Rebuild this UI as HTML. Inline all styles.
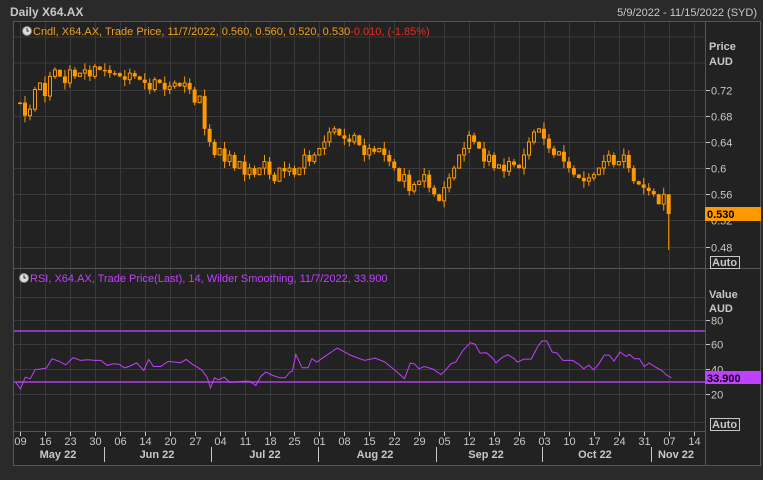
<!DOCTYPE html>
<html><head><meta charset="utf-8"><style>
html,body{margin:0;padding:0;background:#2a2a2a;width:763px;height:480px;overflow:hidden;font-family:"Liberation Sans",sans-serif}
svg text{font-family:"Liberation Sans",sans-serif}
</style></head><body>
<svg id="s" width="763" height="480" xmlns="http://www.w3.org/2000/svg">
<rect x="0" y="0" width="763" height="480" fill="#2a2a2a"/>
<rect x="13" y="21" width="748" height="445" fill="#222"/>
<rect x="13.5" y="21.5" width="747" height="444" fill="none" stroke="#555"/>
<text x="10" y="16" font-size="12" font-weight="bold" fill="#c8c8c8">Daily X64.AX</text>
<text x="757" y="16" font-size="11" fill="#c8c8c8" text-anchor="end">5/9/2022 - 11/15/2022 (SYD)</text>
<g id="grid" stroke="#3a3a3a" stroke-width="1"></g>
<line x1="14" y1="268.5" x2="761" y2="268.5" stroke="#555"/>
<line x1="705.5" y1="22" x2="705.5" y2="465" stroke="#555"/>
<line x1="14" y1="431.5" x2="705" y2="431.5" stroke="#555"/>
<g id="cand"></g>
<line x1="14" y1="331" x2="705" y2="331" stroke="#b040e0" stroke-width="1.5"/>
<line x1="14" y1="382" x2="705" y2="382" stroke="#b040e0" stroke-width="1.5"/>
<polyline id="rsi" fill="none" stroke="#c040ff" stroke-width="1"/>
<circle cx="27" cy="31" r="4.5" fill="#ddd" stroke="#888"/><path d="M27 28v3h2" stroke="#333" fill="none"/>
<text x="33" y="35" font-size="11" fill="#f0a020">Cndl, X64.AX, Trade Price,  11/7/2022, 0.560, 0.560, 0.520, 0.530<tspan fill="#e83020">-0.010, (-1.85%)</tspan></text>
<circle cx="24" cy="278" r="4.5" fill="#ddd" stroke="#888"/><path d="M24 275v3h2" stroke="#333" fill="none"/>
<text x="30" y="282" font-size="11" fill="#c040ff">RSI, X64.AX, Trade Price(Last),  14, Wilder Smoothing,  11/7/2022, 33.900</text>
<g font-size="11" fill="#c8c8c8">
<text x="709" y="50" font-weight="bold">Price</text><text x="709" y="65" font-weight="bold">AUD</text>
<text x="709" y="298" font-weight="bold">Value</text><text x="709" y="312" font-weight="bold">AUD</text>
</g>
<g id="ax" font-size="11" fill="#c8c8c8"></g>
<rect x="705" y="207" width="56" height="14" fill="#ff9900"/>
<text x="707" y="218" font-size="11" font-weight="bold" fill="#000">0.530</text>
<rect x="705" y="371" width="56" height="13" fill="#c040ff"/>
<text x="707" y="382" font-size="11" font-weight="bold" fill="#000">33.900</text>
<rect x="710.5" y="256.5" width="29" height="12" fill="none" stroke="#c8c8c8"/>
<text x="712" y="266" font-size="11" font-weight="bold" fill="#c8c8c8">Auto</text>
<rect x="710.5" y="418.5" width="29" height="12" fill="none" stroke="#c8c8c8"/>
<text x="712" y="428" font-size="11" font-weight="bold" fill="#c8c8c8">Auto</text>
<g id="dates" font-size="11" fill="#c8c8c8" text-anchor="middle"></g>
</svg>
<script>
var NS="http://www.w3.org/2000/svg";
function el(p,t,a,tx){var e=document.createElementNS(NS,t);for(var k in a)e.setAttribute(k,a[k]);if(tx!=null)e.textContent=tx;document.getElementById(p).appendChild(e);return e;}
var wk=24.95,x0=20;
function PY(p){return 89.5+(0.72-p)*655;}
var py=[0.72,0.68,0.64,0.6,0.56,0.52,0.48];
py.forEach(function(p){var y=Math.round(PY(p))+0.5;el("grid","line",{x1:14,y1:y,x2:705,y2:y});el("grid","line",{x1:705,y1:y,x2:710,y2:y,stroke:"#c8c8c8"});el("ax","text",{x:711,y:y+4},String(p));});
[63,37].forEach(function(y){el("grid","line",{x1:14,y1:y,x2:705,y2:y});});
var ry={80:320,60:344,40:369,20:394};
for(var v in ry){var y=ry[v]+0.5;el("grid","line",{x1:14,y1:y,x2:705,y2:y});el("grid","line",{x1:705,y1:y,x2:710,y2:y,stroke:"#c8c8c8"});el("ax","text",{x:711,y:y+4},v);}
el("grid","line",{x1:14,y1:297.5,x2:705,y2:297.5});el("grid","line",{x1:14,y1:422.5,x2:705,y2:422.5});
var lab=["09","16","23","30","06","14","20","27","04","11","18","25","01","08","15","22","29","05","12","19","26","03","10","17","24","31","07","14"];
lab.forEach(function(l,i){var x=Math.round(x0+i*wk)+0.5;el("grid","line",{x1:x,y1:22,x2:x,y2:431});el("grid","line",{x1:x,y1:431,x2:x,y2:436,stroke:"#c8c8c8"});el("dates","text",{x:x,y:445},l);});
[["May 22",58],["Jun 22",157],["Jul 22",265],["Aug 22",375],["Sep 22",486],["Oct 22",595],["Nov 22",676]].forEach(function(m){el("dates","text",{x:m[1],y:458,"font-weight":"bold"},m[0]);});
[104,211,318,436,542,651].forEach(function(x){el("grid","line",{x1:x+.5,y1:447,x2:x+.5,y2:462,stroke:"#c8c8c8"});});
var c=[.70,.68,.69,.72,.73,.71,.74,.75,.74,.73,.75,.74,.745,.75,.74,.755,.75,.75,.745,.745,.74,.735,.745,.74,.735,.73,.72,.735,.73,.72,.725,.73,.725,.73,.72,.70,.71,.66,.64,.62,.63,.61,.62,.60,.61,.59,.60,.59,.60,.61,.59,.58,.60,.595,.60,.59,.60,.62,.61,.62,.63,.64,.655,.66,.65,.645,.64,.65,.635,.62,.63,.625,.63,.62,.61,.60,.58,.59,.565,.575,.58,.59,.57,.56,.55,.57,.585,.60,.62,.63,.65,.64,.63,.61,.62,.60,.605,.595,.61,.605,.60,.62,.64,.655,.66,.645,.63,.62,.625,.61,.60,.59,.585,.58,.585,.59,.60,.61,.62,.605,.61,.62,.60,.58,.575,.57,.565,.56,.545,.56,.53];
var prev=.70;
c.forEach(function(cl,i){var w=Math.floor(i/5),d=i%5;var x=x0+w*wk+d*4.99;var o=prev;if(i==c.length-1)o=.56;var hi=Math.max(o,cl)+((i*7)%4)*0.003+0.001,lo=Math.min(o,cl)-((i*3)%4)*0.003-0.001;if(i==c.length-1){hi=.56;lo=.475;}
var col="#ff9900";el("cand","line",{x1:x,y1:PY(hi),x2:x,y2:PY(lo),stroke:col});var t=PY(Math.max(o,cl)),b=PY(Math.min(o,cl));var h=Math.max(b-t,1.5);
if(cl>o)el("cand","rect",{x:x-1.5,y:t,width:3,height:h,fill:"#222",stroke:col});else el("cand","rect",{x:x-2,y:t,width:4,height:h,fill:col});prev=cl;});
var r=[[33,337],[42,355],[52,320],[62,325],[72,298],[82,296],[95,293],[107,265],[120,272],[135,283],[150,262],[165,270],[180,268],[195,270],[207,270],[220,285],[232,280],[245,282],[255,292],[265,288],[280,277],[295,300],[305,267],[315,288],[330,288],[345,273],[360,275],[370,277],[382,267],[395,282],[405,290],[415,300],[425,320],[432,352],[440,322],[448,328],[460,320],[472,336],[485,334],[500,332],[512,332],[525,345],[535,318],[545,305],[560,315],[575,322],[585,322],[595,305],[600,302],[607,252],[620,292],[632,292],[640,265],[650,275],[660,265],[670,255],[680,245],[692,233],[705,243],[720,255],[735,263],[748,270],[770,263],[790,275],[815,305],[830,325],[842,278],[850,280],[860,295],[870,288],[880,292],[890,297],[905,312],[915,298],[925,280],[935,275],[950,240],[965,217],[975,222],[985,248],[998,247],[1010,262],[1018,277],[1030,262],[1042,253],[1055,265],[1062,275],[1075,266],[1090,266],[1103,230],[1112,212],[1122,212],[1133,245],[1143,248],[1155,270],[1175,270],[1188,282],[1198,295],[1208,284],[1218,298],[1228,282],[1240,254],[1250,254],[1260,272],[1272,245],[1285,258],[1292,252],[1302,265],[1312,265],[1322,288],[1332,278],[1345,290],[1358,300],[1368,314],[1378,322]];
document.getElementById("rsi").setAttribute("points",r.map(function(p){return (p[0]/2.052).toFixed(1)+","+(270+p[1]/2.986).toFixed(1);}).join(" "));
</script>
</body></html>
